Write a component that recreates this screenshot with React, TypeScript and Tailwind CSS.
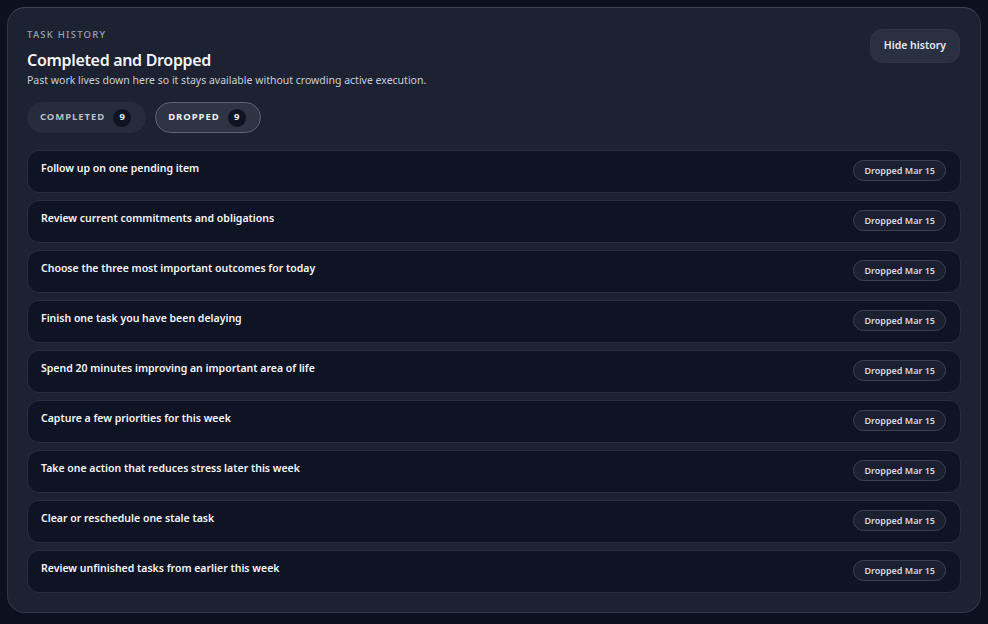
import React from "react";

const tasks = [
  "Follow up on one pending item",
  "Review current commitments and obligations",
  "Choose the three most important outcomes for today",
  "Finish one task you have been delaying",
  "Spend 20 minutes improving an important area of life",
  "Capture a few priorities for this week",
  "Take one action that reduces stress later this week",
  "Clear or reschedule one stale task",
  "Review unfinished tasks from earlier this week",
];

export default function App() {
  return (
    <div
      className="min-h-[624px] w-full bg-[#0c1120] px-[7px] pt-[7px] pb-[11px]"
      style={{ fontFamily: '"Noto Sans", "Open Sans", sans-serif' }}
    >
      <div className="rounded-[18px] border border-[#2e3647] border-t-[#3a4252] bg-[#1c2231] px-[19px] pt-[20px] pb-[19px]">
        <div className="flex items-start justify-between">
          <div>
            <div className="text-[9.5px] leading-[14px] font-medium tracking-[0.13em] text-[#9aa2b1] uppercase">
              Task History
            </div>
            <div className="mt-[7px] text-[16px] leading-[22px] font-semibold tracking-[-0.02em] text-[#f2f4f8]">
              Completed and Dropped
            </div>
            <div className="mt-[1px] text-[10.5px] leading-[16px] text-[#c9ced8]">
              Past work lives down here so it stays available without crowding active execution.
            </div>
          </div>
          <button className="mt-[1px] mr-[1px] h-[34px] rounded-[12px] border border-[#2c3445] bg-[#293041] px-[13px] text-[10.5px] font-semibold text-[#e6e9ef]">
            Hide history
          </button>
        </div>

        <div className="mt-[14px] flex gap-[9px]">
          <div className="flex h-[31px] items-center gap-[8px] rounded-full border border-[#262d3c] bg-[#252c3b] pl-[12px] pr-[14px]">
            <span className="text-[9.5px] font-bold tracking-[0.1em] text-[#b7bdc9]">COMPLETED</span>
            <span className="flex h-[18px] w-[18px] items-center justify-center rounded-full bg-[#0f1423] text-[9.5px] font-bold text-[#e6e9ef]">
              9
            </span>
          </div>
          <div className="flex h-[31px] items-center gap-[8px] rounded-full border border-[#5a6273] bg-[#2d3444] pl-[12px] pr-[14px]">
            <span className="text-[9.5px] font-bold tracking-[0.1em] text-[#eef1f6]">DROPPED</span>
            <span className="flex h-[18px] w-[18px] items-center justify-center rounded-full bg-[#0f1423] text-[9.5px] font-bold text-[#e6e9ef]">
              9
            </span>
          </div>
        </div>

        <div className="mt-[17px] flex flex-col gap-[7px]">
          {tasks.map((t) => (
            <div
              key={t}
              className="flex h-[43px] items-start justify-between rounded-[12px] border border-[#272e3e] bg-[#0f1424] pl-[13px] pr-[13px]"
            >
              <div className="pt-[9px] text-[10.5px] leading-[16px] font-semibold text-[#f4f6fa]">{t}</div>
              <div className="mt-[9px] mr-[1px] flex h-[21px] items-center rounded-full border border-[#394153] bg-[#1a2030] px-[10px] text-[9px] font-semibold text-[#d4d8e0]">
                Dropped Mar 15
              </div>
            </div>
          ))}
        </div>
      </div>
    </div>
  );
}
